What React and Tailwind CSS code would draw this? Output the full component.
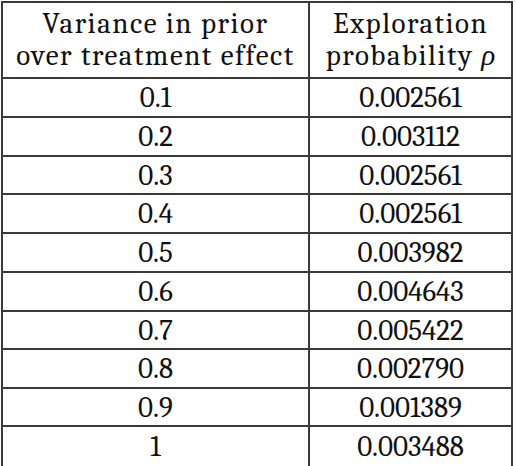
import React from 'react';

const rows = [
  ['0.1', '0.002561', 39],
  ['0.2', '0.003112', 39],
  ['0.3', '0.002561', 38],
  ['0.4', '0.002561', 39],
  ['0.5', '0.003982', 39],
  ['0.6', '0.004643', 39],
  ['0.7', '0.005422', 38],
  ['0.8', '0.002790', 39],
  ['0.9', '0.001389', 38],
  ['1', '0.003488', 39],
];

const heights = {
  39: 'h-[39px]',
  38: 'h-[38px]',
};

export default function App() {
  return (
    <div className="w-[516px] h-[466px] bg-white pt-px pl-px font-serif text-[#111]">
      <div className="w-[512px] border-2 border-[#3a3a3a]">
        {/* header */}
        <div className="grid grid-cols-[307px_1fr] h-[76px] border-b-2 border-[#3a3a3a]">
          <div className="border-r-2 border-[#3a3a3a] flex flex-col items-center justify-center text-[29px] leading-[32px] tracking-[1.5px]">
            <span>Variance in prior</span>
            <span>over treatment effect</span>
          </div>
          <div className="flex flex-col items-center justify-center text-[29px] leading-[32px] tracking-[1.5px]">
            <span>Exploration</span>
            <span>
              probability <span className="italic tracking-normal">ρ</span>
            </span>
          </div>
        </div>

        {/* rows */}
        {rows.map(([v, p, h], i) => (
          <div
            key={i}
            className={`grid grid-cols-[307px_1fr] ${heights[h]} ${i < rows.length - 1 ? 'border-b-2 border-[#3a3a3a]' : ''}`}
          >
            <div className="border-r-2 border-[#3a3a3a] flex items-center justify-center text-[29px] leading-none">
              {v}
            </div>
            <div className="flex items-center justify-center text-[29px] leading-none">
              {p}
            </div>
          </div>
        ))}
      </div>
    </div>
  );
}
